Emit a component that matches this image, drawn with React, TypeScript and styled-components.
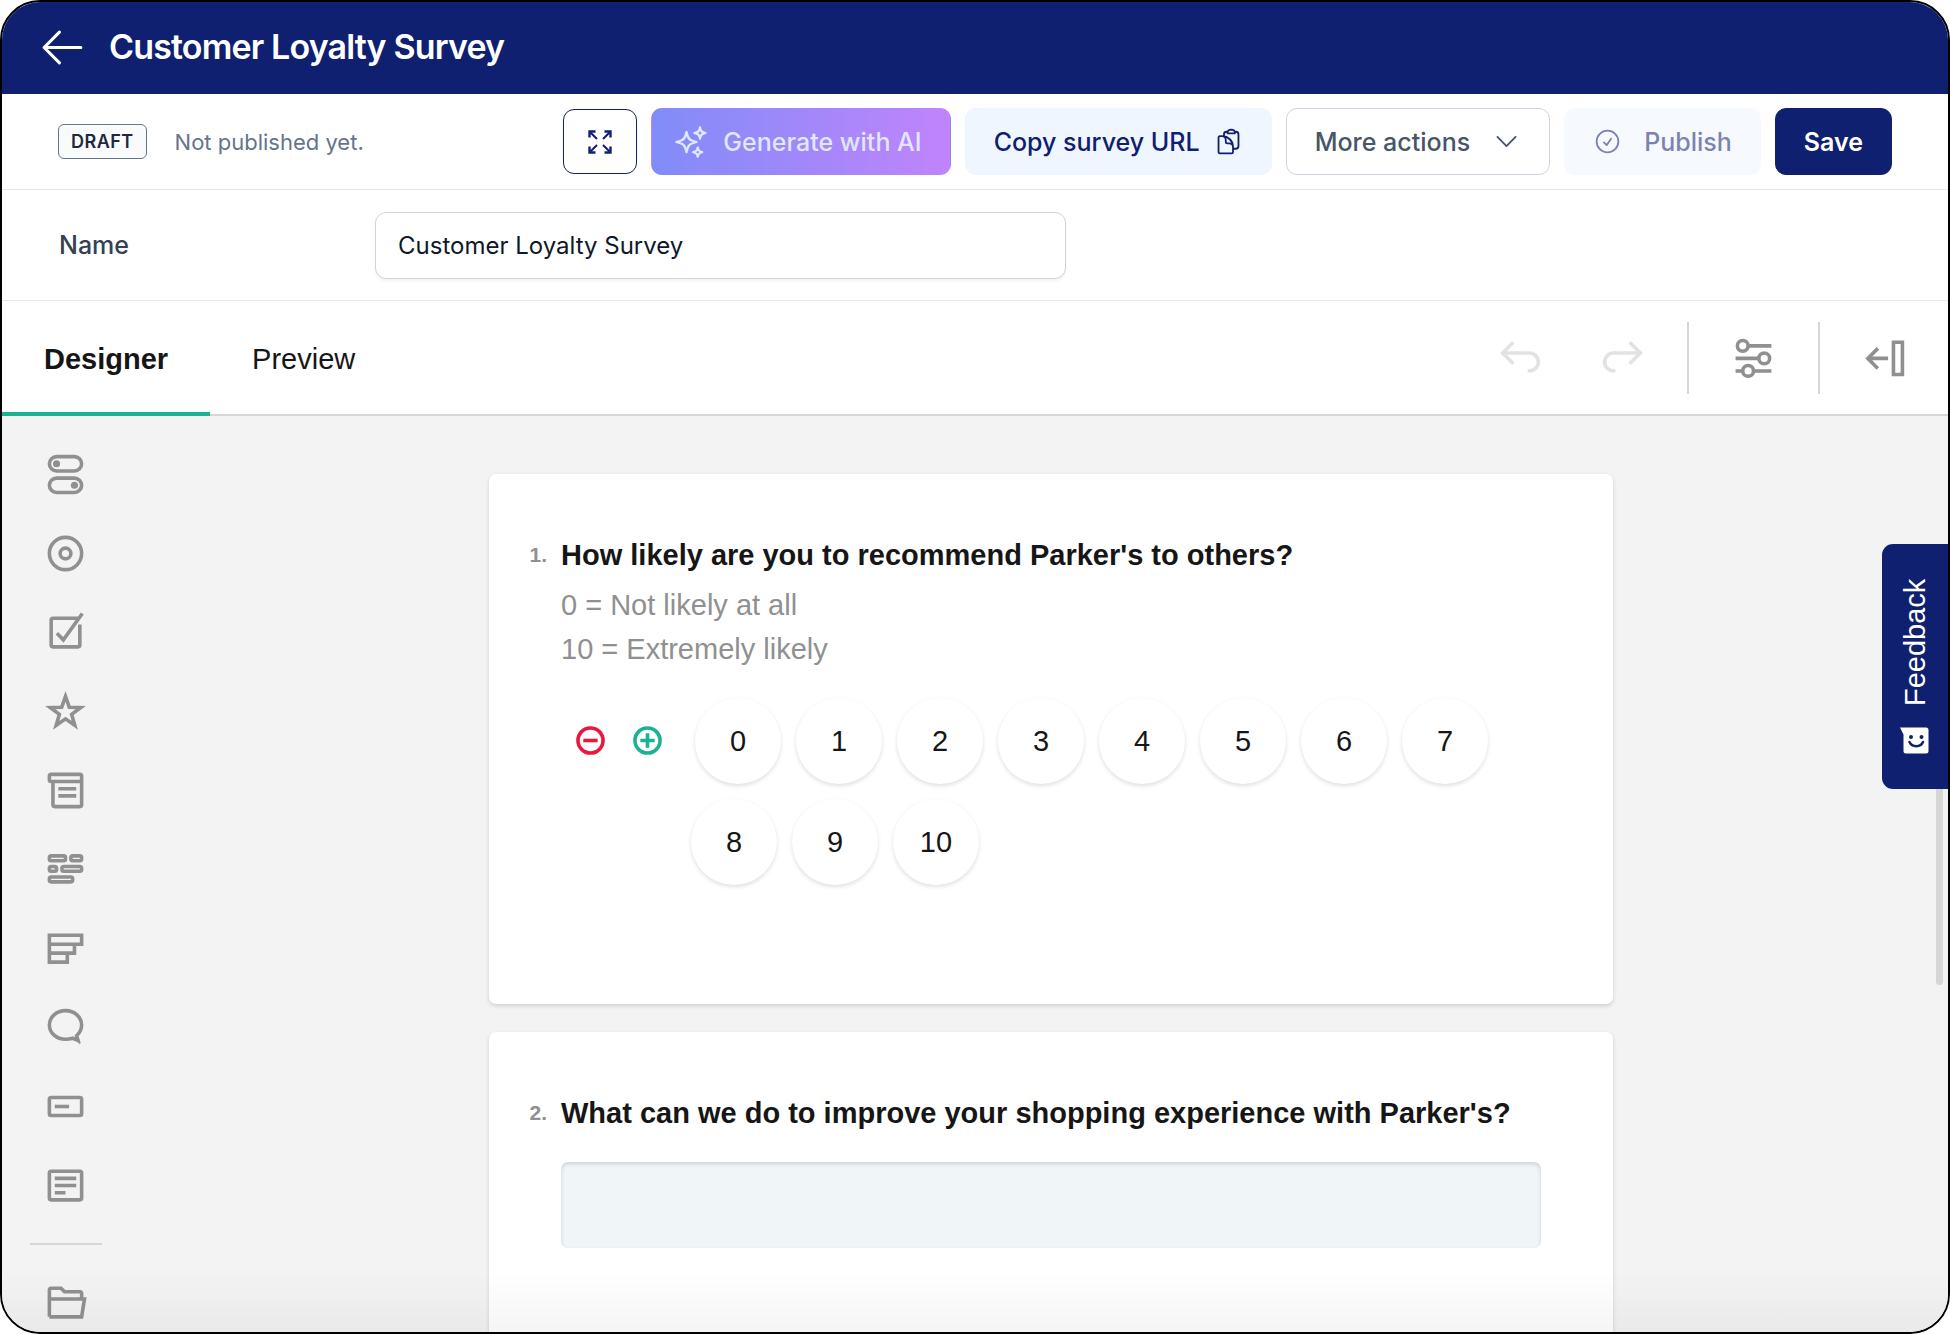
import React from "react";
import styled, { createGlobalStyle, css } from "styled-components";
import {
  HiOutlineArrowLeft,
  HiOutlineCheckCircle,
  HiOutlineChevronDown,
  HiOutlineClipboardDocument,
  HiOutlineSparkles,
} from "react-icons/hi2";

const navy = "#102070";
const teal = "#19b394";
const ui = `Inter, "Liberation Sans", sans-serif`;
const survey = `"Liberation Sans", Arial, sans-serif`;

const GlobalStyle = createGlobalStyle`
  *, *::before, *::after { box-sizing: border-box; }
  body { margin: 0; background: #fff; font-family: ${ui}; }
  button, input { font: inherit; margin: 0; }
  h1, h2, p, ul { margin: 0; padding: 0; }
`;

const Frame = styled.div`
  position: relative;
  display: flex;
  flex-direction: column;
  height: 100vh;
  border: 2px solid #000;
  border-radius: 40px;
  overflow: hidden;
  background: #fff;
`;

const Header = styled.header`
  display: flex;
  flex: none;
  align-items: center;
  gap: 22px;
  height: 92px;
  padding: 0 36px 2px;
  background: ${navy};
  color: #fff;
`;

const BackLink = styled.a`
  display: flex;
  color: inherit;
`;

const PageTitle = styled.h1`
  font-size: 34px;
  line-height: 44px;
  font-weight: 600;
  letter-spacing: -0.025em;
`;

const ActionBar = styled.div`
  display: flex;
  flex: none;
  align-items: center;
  justify-content: space-between;
  height: 96px;
  padding: 0 56px;
  border-bottom: 1px solid #e2e8f0;
`;

const Status = styled.div`
  display: flex;
  align-items: center;
  gap: 28px;
  font-size: 22px;
  color: #64748b;
`;

const Badge = styled.span`
  padding: 0 12px;
  border: 1px solid #64748b;
  border-radius: 6px;
  background: #f8fafc;
  color: #1e293b;
  font-size: 18px;
  line-height: 33px;
  font-weight: 600;
  letter-spacing: 0.025em;
`;

const Actions = styled.div`
  display: flex;
  align-items: center;
  gap: 14px;
`;

type Tone = "ai" | "soft" | "outline" | "solid";

const tones = {
  ai: css`
    padding-left: 21px;
    border-color: transparent;
    background: linear-gradient(to right, #818cf8, #c084fc);
    color: #e0e7ff;
  `,
  soft: css`
    border-color: transparent;
    background: #eff6ff;
    color: ${navy};
  `,
  outline: css`
    border-color: #cbd5e1;
    background: #fff;
    color: #475569;
  `,
  solid: css`
    border-color: ${navy};
    background: ${navy};
    color: #fff;
    font-weight: 600;
  `,
};

const Button = styled.button<{ $tone: Tone; $gap?: number }>`
  display: flex;
  align-items: center;
  gap: ${(p) => p.$gap ?? 14}px;
  height: 67px;
  padding: 0 28px;
  border: 1px solid;
  border-radius: 11px;
  font-size: 25px;
  font-weight: 500;
  white-space: nowrap;
  ${(p) => tones[p.$tone]}
  &:disabled { opacity: 0.55; }
`;

const ExpandButton = styled.button`
  display: flex;
  align-items: center;
  justify-content: center;
  width: 74px;
  height: 65px;
  padding: 0;
  border: 1px solid ${navy};
  border-radius: 11px;
  background: #fff;
  color: ${navy};
`;

const NameRow = styled.div`
  display: grid;
  flex: none;
  grid-template-columns: 316px minmax(0, 691px);
  align-items: center;
  height: 111px;
  padding: 0 57px;
  border-bottom: 1px solid #e2e8f0;
`;

const NameLabel = styled.label`
  font-size: 25px;
  font-weight: 500;
  color: #334155;
`;

const NameInput = styled.input`
  height: 67px;
  padding: 0 22px;
  border: 1px solid #cbd5e1;
  border-radius: 11px;
  box-shadow: 0 2px 3px rgba(0, 0, 0, 0.05);
  background: #fff;
  color: #0f172a;
  font-size: 24px;
`;

const TabBar = styled.div`
  display: flex;
  flex: none;
  justify-content: space-between;
  height: 115px;
  border-bottom: 2px solid #d6d6d6;
  background: #fff;
  font-family: ${survey};
`;

const Tabs = styled.div`
  display: flex;
`;

const Tab = styled.button<{ $active?: boolean }>`
  height: 115px;
  padding: 6px 42px 0;
  border: 0;
  border-bottom: 4px solid ${(p) => (p.$active ? teal : "transparent")};
  background: none;
  color: #161616;
  font-size: 29px;
  font-weight: ${(p) => (p.$active ? 700 : 400)};
`;

const Tools = styled.div`
  display: flex;
  align-items: center;
  gap: 43px;
  padding-right: 42px;
`;

const History = styled.div`
  display: flex;
  gap: 59px;
`;

const IconButton = styled.button`
  display: flex;
  padding: 0;
  border: 0;
  background: none;
  color: #909090;
  &:disabled { opacity: 0.25; }
`;

const VerticalRule = styled.span`
  width: 2px;
  height: 72px;
  background: #d6d6d6;
`;

const Workspace = styled.div`
  display: flex;
  flex: 1;
  min-height: 0;
  background: #f3f3f3;
  font-family: ${survey};
`;

const Toolbox = styled.nav`
  display: flex;
  flex: none;
  flex-direction: column;
  align-items: center;
  gap: 36px;
  width: 152px;
  padding: 37px 25px 0 0;
  overflow: hidden;
`;

const HorizontalRule = styled.span`
  flex: none;
  width: 72px;
  height: 2px;
  background: #d6d6d6;
`;

const Canvas = styled.main`
  display: flex;
  flex: 1;
  flex-direction: column;
  align-items: center;
  gap: 28px;
  padding-top: 58px;
  overflow: hidden;
`;

const Card = styled.section`
  display: grid;
  flex: none;
  grid-template-columns: 22px 1fr;
  column-gap: 14px;
  align-content: start;
  width: 100%;
  max-width: 1124px;
  min-height: 530px;
  padding: 59px 72px 0 36px;
  border-radius: 7px;
  background: #fff;
  box-shadow: 0 2px 4px rgba(0, 0, 0, 0.15);
`;

const Ordinal = styled.span`
  color: #909090;
  font-size: 21px;
  line-height: 44px;
  font-weight: 700;
  text-align: right;
`;

const QuestionTitle = styled.h2`
  color: #161616;
  font-size: 29px;
  line-height: 44px;
  font-weight: 700;
`;

const Description = styled.p`
  padding-top: 6px;
  color: #909090;
  font-size: 29px;
  line-height: 44px;
`;

const RatingRow = styled.div`
  display: flex;
  align-items: flex-start;
  gap: 22px;
  padding: 27px 0 0 8px;
`;

const Steppers = styled.div`
  display: flex;
  flex: none;
  align-items: center;
  gap: 14px;
  height: 84px;
`;

const Stepper = styled.button<{ $color: string }>`
  display: flex;
  padding: 0;
  border: 0;
  background: none;
  color: ${(p) => p.$color};
`;

const Scale = styled.div`
  text-indent: 4px;
`;

const ScaleItem = styled.label`
  display: inline-flex;
  align-items: center;
  justify-content: center;
  width: 86px;
  height: 86px;
  margin: 0 15px 15px 0;
  border-radius: 50%;
  background: #fff;
  box-shadow: 0 2px 4px rgba(0, 0, 0, 0.13);
  color: #161616;
  font-size: 29px;
  text-indent: 0;
  vertical-align: top;
`;

const HiddenRadio = styled.input`
  position: absolute;
  width: 1px;
  height: 1px;
  opacity: 0;
`;

const Answer = styled.input`
  width: 100%;
  height: 86px;
  margin-top: 27px;
  padding: 0 28px;
  border: 0;
  border-radius: 7px;
  background: #f0f5f8;
  box-shadow: inset 0 2px 4px rgba(0, 0, 0, 0.15);
  font-size: 29px;
`;

const FeedbackTab = styled.button`
  position: absolute;
  top: 542px;
  right: 0;
  display: flex;
  align-items: center;
  justify-content: center;
  gap: 21px;
  width: 66px;
  height: 245px;
  padding: 0;
  border: 0;
  border-radius: 0 11px 11px 0;
  background: ${navy};
  color: #fff;
  font-family: ${survey};
  font-size: 29px;
  writing-mode: vertical-rl;
  transform: rotate(180deg);
`;

const ScrollThumb = styled.span`
  position: absolute;
  top: 700px;
  right: 5px;
  width: 7px;
  height: 283px;
  border-radius: 4px;
  background: #d6d6d6;
`;

const BottomFade = styled.div`
  position: absolute;
  right: 0;
  bottom: 0;
  left: 0;
  height: 60px;
  background: linear-gradient(to bottom, rgba(0, 0, 0, 0), rgba(0, 0, 0, 0.04));
  pointer-events: none;
`;

const Glyph = ({ children }: { children: React.ReactNode }) => (
  <svg width="43" height="43" viewBox="0 0 24 24" fill="none" stroke="currentColor" strokeWidth="2" aria-hidden="true">
    {children}
  </svg>
);

const toolbox: { name: string; icon: React.ReactNode }[] = [
  {
    name: "Yes/No",
    icon: (
      <>
        <rect x="3" y="2" width="18" height="8" rx="4" />
        <rect x="3" y="14" width="18" height="8" rx="4" />
        <circle cx="7" cy="6" r="2" fill="currentColor" stroke="none" />
        <circle cx="17" cy="18" r="2" fill="currentColor" stroke="none" />
      </>
    ),
  },
  {
    name: "Radio group",
    icon: (
      <>
        <circle cx="12" cy="12" r="9" />
        <circle cx="12" cy="12" r="3" />
      </>
    ),
  },
  {
    name: "Checkboxes",
    icon: (
      <>
        <path d="M19 4H5a1 1 0 0 0-1 1v14a1 1 0 0 0 1 1h14a1 1 0 0 0 1-1V7.5" />
        <path d="M7.2 12.4l3.6 3.7L21.4 1.4" />
      </>
    ),
  },
  {
    name: "Rating",
    icon: (
      <path
        strokeMiterlimit="10"
        d="M12 3.6L14.1 9.6L20.5 9.8L15.4 13.6L17.2 19.7L12 16.1L6.8 19.7L8.6 13.6L3.5 9.8L9.9 9.6z"
      />
    ),
  },
  {
    name: "Dropdown",
    icon: (
      <>
        <path d="M5 7v13a1 1 0 0 0 1 1h14a1 1 0 0 0 1-1V4a1 1 0 0 0-1-1H4a1 1 0 0 0-1 1v2a1 1 0 0 0 1 1h17" />
        <path d="M8 11h10M8 15h10" />
      </>
    ),
  },
  {
    name: "Tag box",
    icon: (
      <>
        <rect x="3" y="4.4" width="9" height="2.7" rx="1" />
        <rect x="15" y="4.4" width="6" height="2.7" rx="1" />
        <rect x="3" y="10.3" width="4" height="2.7" rx="1" />
        <rect x="10" y="10.3" width="11" height="2.7" rx="1" />
        <rect x="3" y="16.2" width="13" height="2.7" rx="1" />
      </>
    ),
  },
  {
    name: "Ranking",
    icon: <path d="M3 4.6h18v5H3zM3 9.6h14v5H3zM3 14.6h10v5H3z" />,
  },
  {
    name: "Comment",
    icon: (
      <>
        <path d="M12 2.6c5 0 9 3.5 9 8 0 2.5-1.2 4.5-2.8 6l.8 2.6-3-1.2c-1.200.4-2.600.6-4 .6-5 0-9-3.500-9-8s4-8 9-8z" />
        <path d="M17 18l3 3.600-.5-4z" fill="currentColor" stroke="none" />
      </>
    ),
  },
  {
    name: "Single-line input",
    icon: (
      <>
        <rect x="3" y="7" width="18" height="10" rx="1" />
        <path d="M6 12h8" />
      </>
    ),
  },
  {
    name: "Long text",
    icon: (
      <>
        <rect x="3" y="4" width="18" height="16" rx="1" />
        <path d="M6 8h12M6 12h12M6 16h6" />
      </>
    ),
  },
];

const scale = Array.from({ length: 11 }, (_, i) => i);

export default function App() {
  return (
    <>
      <GlobalStyle />
      <Frame>
        <Header>
          <BackLink href="#" aria-label="Back">
            <HiOutlineArrowLeft size={49} />
          </BackLink>
          <PageTitle>Customer Loyalty Survey</PageTitle>
        </Header>

        <ActionBar>
          <Status>
            <Badge>DRAFT</Badge>
            <span>Not published yet.</span>
          </Status>
          <Actions>
            <ExpandButton aria-label="Full screen">
              <svg width="24" height="24" viewBox="0 0 24 24" fill="none" stroke="currentColor" strokeWidth="2" aria-hidden="true">
                <path d="M9 9L2.5 2.5M15 9l6.5-6.5M9 15l-6.500 6.500M15 15l6.500 6.500" />
                <path strokeWidth="2.4" d="M1.500 7.500v-6h6M16.500 1.500h6v6M1.500 16.500v6h6M22.500 16.500v6h-6" />
              </svg>
            </ExpandButton>
            <Button $tone="ai">
              <HiOutlineSparkles size={36} />
              Generate with AI
            </Button>
            <Button $tone="soft">
              Copy survey URL
              <HiOutlineClipboardDocument size={29} />
            </Button>
            <Button $tone="outline" $gap={22} aria-haspopup="menu">
              More actions
              <HiOutlineChevronDown size={29} />
            </Button>
            <Button $tone="soft" $gap={22} disabled>
              <HiOutlineCheckCircle size={29} />
              Publish
            </Button>
            <Button $tone="solid">Save</Button>
          </Actions>
        </ActionBar>

        <NameRow>
          <NameLabel htmlFor="survey-name">Name</NameLabel>
          <NameInput id="survey-name" defaultValue="Customer Loyalty Survey" />
        </NameRow>

        <TabBar>
          <Tabs role="tablist">
            <Tab role="tab" aria-selected="true" $active>Designer</Tab>
            <Tab role="tab" aria-selected="false">Preview</Tab>
          </Tabs>
          <Tools>
            <History>
              <IconButton aria-label="Undo" disabled>
                <Glyph>
                  <path d="M2 9.500h15a4.900 4.900 0 0 1 0 9.900h-1M8 3.500l-6 6 6 6" />
                </Glyph>
              </IconButton>
              <IconButton aria-label="Redo" disabled>
                <Glyph>
                  <path d="M22 9.500H7a4.900 4.900 0 0 0 0 9.900h1M16 3.500l6 6-6 6" />
                </Glyph>
              </IconButton>
            </History>
            <VerticalRule />
            <IconButton aria-label="Survey settings">
              <Glyph>
                <circle cx="6" cy="5.500" r="3" />
                <circle cx="18" cy="12.500" r="3" />
                <circle cx="9" cy="19.500" r="3" />
                <path d="M9 5.500h13M2 12.500h13M2 19.500h4M12 19.500h10" />
              </Glyph>
            </IconButton>
            <VerticalRule />
            <IconButton aria-label="Open side panel">
              <Glyph>
                <path d="M17 3.500h5v18h-5zM14 12.500H2.500M8.300 6.900l-5.600 5.600 5.600 5.600" />
              </Glyph>
            </IconButton>
          </Tools>
        </TabBar>

        <Workspace>
          <Toolbox aria-label="Question types">
            {toolbox.map((tool) => (
              <IconButton key={tool.name} aria-label={tool.name}>
                <Glyph>{tool.icon}</Glyph>
              </IconButton>
            ))}
            <HorizontalRule />
            <IconButton aria-label="Panel">
              <Glyph>
                <path d="M3 20V5a1 1 0 0 1 1-1h5.500l2 2H20a1 1 0 0 1 1 1v3M2 10h20.600L21 20H3" />
              </Glyph>
            </IconButton>
          </Toolbox>

          <Canvas>
            <Card>
              <Ordinal>1.</Ordinal>
              <div>
                <QuestionTitle>How likely are you to recommend Parker's to others?</QuestionTitle>
                <Description>
                  0 = Not likely at all
                  <br />
                  10 = Extremely likely
                </Description>
                <RatingRow>
                  <Steppers>
                    <Stepper $color="#e8183f" aria-label="Remove a rate value">
                      <Glyph>
                        <circle cx="12" cy="12" r="7" />
                        <path d="M8 12h8" />
                      </Glyph>
                    </Stepper>
                    <Stepper $color={teal} aria-label="Add a rate value">
                      <Glyph>
                        <circle cx="12" cy="12" r="7" />
                        <path d="M8 12h8M12 8v8" />
                      </Glyph>
                    </Stepper>
                  </Steppers>
                  <Scale role="radiogroup">
                    {scale.map((value) => (
                      <ScaleItem key={value}>
                        <HiddenRadio type="radio" name="recommend" value={value} />
                        {value}
                      </ScaleItem>
                    ))}
                  </Scale>
                </RatingRow>
              </div>
            </Card>

            <Card>
              <Ordinal>2.</Ordinal>
              <div>
                <QuestionTitle id="q2">What can we do to improve your shopping experience with Parker's?</QuestionTitle>
                <Answer type="text" aria-labelledby="q2" />
              </div>
            </Card>
          </Canvas>
        </Workspace>

        <ScrollThumb />
        <BottomFade />
        <FeedbackTab>
          <svg width="29" height="27" viewBox="0 0 29 27" aria-hidden="true">
            <g transform="rotate(180 14.5 13.5)">
              <path d="M0 .5h26A2.5 2.5 0 0 1 28.5 3v21a2.5 2.5 0 0 1-2.5 2.5H6A2.5 2.5 0 0 1 3.5 24V7.5z" fill="#fff" />
              <circle cx="11" cy="10" r="2" fill={navy} />
              <circle cx="21.5" cy="10" r="2" fill={navy} />
              <path d="M9.5 15c2.5 5.5 11 5.5 13.5 0" fill="none" stroke={navy} strokeWidth="2.5" strokeLinecap="round" />
            </g>
          </svg>
          Feedback
        </FeedbackTab>
      </Frame>
    </>
  );
}
